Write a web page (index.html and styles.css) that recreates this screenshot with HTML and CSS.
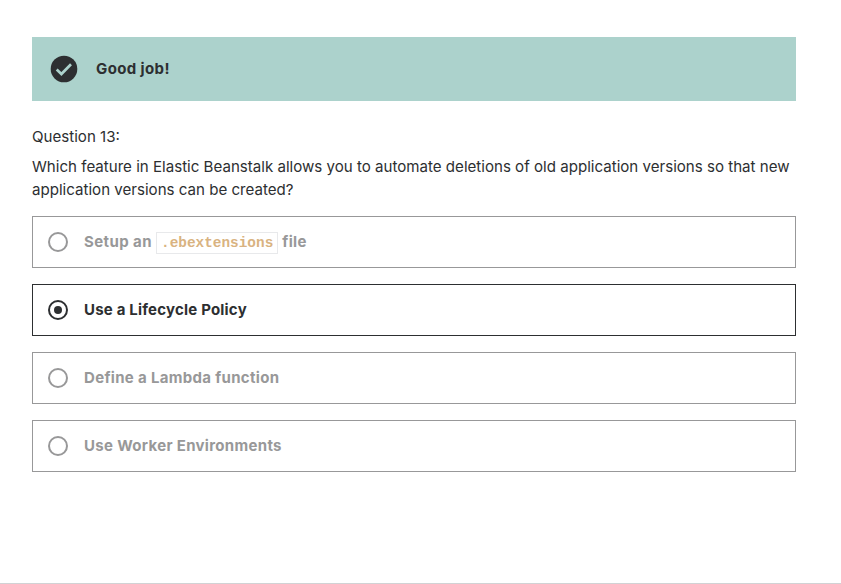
FILE: index.html
```html
<!DOCTYPE html>
<html lang="en">
<head>
<meta charset="utf-8">
<title>Quiz question</title>
<link rel="stylesheet" href="styles.css">
</head>
<body>
<main class="quiz">
<div class="alert">
<svg class="check" viewBox="0 0 28 28"><circle cx="14" cy="14" r="13.3" fill="#2d2f31"/><path d="M6.7 14.6l4.7 4.4 9.6-9.7" fill="none" stroke="#acd2cc" stroke-width="2.7"/></svg>
<span class="alert-text">Good job!</span>
</div>
<p class="number">Question 13:</p>
<p class="prompt">Which feature in Elastic Beanstalk allows you to automate deletions of old application versions so that new<br>application versions can be created?</p>
<ul class="answers">
<li class="answer"><span class="radio"></span><span class="label"><span class="setup">Setup an</span><code>.ebextensions</code>file</span></li>
<li class="answer selected"><span class="radio"></span><span class="label">Use a Lifecycle Policy</span></li>
<li class="answer"><span class="radio"></span><span class="label">Define a Lambda function</span></li>
<li class="answer"><span class="radio"></span><span class="label">Use Worker Environments</span></li>
</ul>
</main>
<footer class="footer"></footer>
</body>
</html>
```
FILE: styles.css
```css
* { box-sizing: border-box; }
body { margin: 0; height: 584px; display: flex; flex-direction: column; background: #fff; color: #2d2f31; font: 15.1px/23px Inter, "Liberation Sans", sans-serif; overflow: hidden; }
.quiz { flex: 1; width: 796px; padding: 37px 0 0 32px; }
.alert { display: flex; align-items: center; height: 64px; padding-left: 18px; background: #acd2cc; font-weight: 700; font-size: 15px; letter-spacing: 0.38px; }
.alert-text { padding-bottom: 2px; }
.check { width: 28px; height: 28px; margin-right: 18px; }
.number { margin: 24px 0 7px; }
.prompt { margin: 0 0 15px; white-space: nowrap; }
.answers { list-style: none; margin: 0; padding: 0; display: grid; gap: 16px; }
.answer { display: flex; align-items: center; height: 52px; padding-left: 15px; border: 1px solid #989899; color: #989899; font-weight: 700; font-size: 15px; letter-spacing: 0.32px; }
.selected { color: #2d2f31; border-color: #2d2f31; letter-spacing: 0.2px; }
.radio { width: 20px; height: 20px; margin-right: 16px; border: 2px solid currentColor; border-radius: 50%; display: grid; place-items: center; }
.selected .radio::after { content: ""; width: 8px; height: 8px; border-radius: 50%; background: currentColor; }
.label { display: flex; align-items: center; padding-bottom: 2px; }
.setup { letter-spacing: 0.42px; }
code { margin: 4px 4px 0; padding: 0 4px; height: 22px; border: 1px solid #e8e9eb; color: #d9b381; font: 700 14.4px/20px "Liberation Mono", monospace; letter-spacing: 0; }
.footer { height: 1px; background: #d1d2d4; }
```
